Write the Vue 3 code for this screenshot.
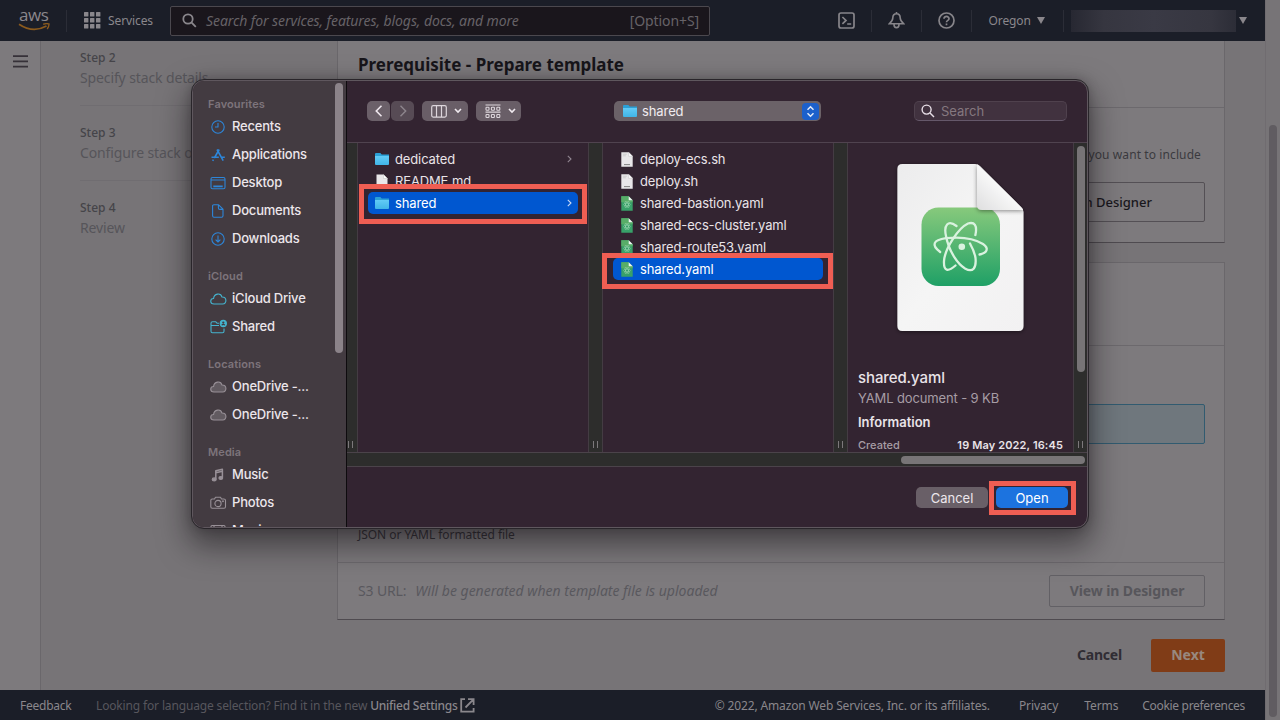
<script setup>
const steps = [
  { n: 'Step 2', label: 'Specify stack details' },
  { n: 'Step 3', label: 'Configure stack options' },
  { n: 'Step 4', label: 'Review' },
]
const groups = [
  { title: 'Favourites', tone: 'blue', items: [['clock', 'Recents'], ['apps', 'Applications'], ['desktop', 'Desktop'], ['doc', 'Documents'], ['down', 'Downloads']] },
  { title: 'iCloud', tone: 'teal', items: [['cloud', 'iCloud Drive'], ['sharedf', 'Shared']] },
  { title: 'Locations', tone: 'grey', items: [['cloudf', 'OneDrive -...'], ['cloudf', 'OneDrive -...']] },
  { title: 'Media', tone: 'grey', items: [['music', 'Music'], ['photo', 'Photos'], ['movie', 'Movies']] },
]
const colA = [
  { kind: 'folder', name: 'dedicated', more: true },
  { kind: 'text', name: 'README.md' },
  { kind: 'folder', name: 'shared', more: true, on: true },
]
const colB = [
  { kind: 'text', name: 'deploy-ecs.sh' },
  { kind: 'text', name: 'deploy.sh' },
  { kind: 'yaml', name: 'shared-bastion.yaml' },
  { kind: 'yaml', name: 'shared-ecs-cluster.yaml' },
  { kind: 'yaml', name: 'shared-route53.yaml' },
  { kind: 'yaml', name: 'shared.yaml', on: true },
]
</script>

<template>
  <div class="screen">
    <div class="page">
      <header class="top">
        <div class="logo">
          <span class="aws">aws</span>
          <svg class="smile" width="33" height="9" viewBox="0 0 33 9"><path d="M1 1.2 Q15 10.5 28.5 3" fill="none" stroke="#8b5a1d" stroke-width="1.7" /><path d="M25.2 1.2 Q29 .2 31 1 Q31.2 3 29.2 6" fill="none" stroke="#8b5a1d" stroke-width="1.4" /></svg>
        </div>
        <i class="vr"></i>
        <div class="services">
          <svg width="17" height="17" viewBox="0 0 17 17" fill="#8a878c"><template v-for="r in 3" :key="r"><rect v-for="c in 3" :key="c" :x="(c - 1) * 6" :y="(r - 1) * 6" width="4.4" height="4.4" rx=".5" /></template></svg>
          <span>Services</span>
        </div>
        <div class="find">
          <svg width="15" height="15" viewBox="0 0 15 15" fill="none" stroke="#8a878c" stroke-width="1.8"><circle cx="6" cy="6" r="4.7" /><path d="M9.4 9.4 L13.8 13.8" /></svg>
          <em>Search for services, features, blogs, docs, and more</em>
          <span class="key">[Option+S]</span>
        </div>
        <div class="tools">
          <svg width="17" height="17" viewBox="0 0 17 17" fill="none" stroke="#87858a" stroke-width="1.7"><rect x="1" y="1" width="15" height="15" rx="2" /><path d="M4.4 5 L8 8.4 L4.4 11.8 M9.2 12h4" /></svg>
          <i class="vr"></i>
          <svg width="17" height="17" viewBox="0 0 17 17" fill="none" stroke="#87858a" stroke-width="1.6"><path d="M8.5 1.7 C5.7 1.7 4.8 4 4.8 6 C4.8 8.5 3.6 9.7 1.5 11.7 H15.5 C13.4 9.7 12.2 8.5 12.2 6 C12.2 4 11.3 1.7 8.5 1.7Z M8.5 0v2 M6 12.5 C6 16.6 11 16.6 11 12.5" /></svg>
          <i class="vr"></i>
          <svg width="17" height="17" viewBox="0 0 17 17" fill="none" stroke="#87858a" stroke-width="1.7"><circle cx="8.5" cy="8.5" r="7.5" /><path d="M6 6.8 C6 3.6 11.1 3.7 11 6.8 C11 8.5 8.5 8.3 8.5 10.3 M8.5 11.5v1.7" /></svg>
          <i class="vr"></i>
          <span class="region">Oregon</span>
          <i class="tri"></i>
          <i class="vr"></i>
          <i class="account"></i>
          <i class="tri"></i>
        </div>
      </header>

      <main class="body">
        <aside class="rail"><svg width="15" height="13" viewBox="0 0 15 13" stroke="#363138" stroke-width="1.8"><path d="M0 1.2h15M0 6.4h15M0 11.6h15" /></svg></aside>
        <nav class="steps">
          <div v-for="s in steps" :key="s.n" class="step"><b>{{ s.n }}</b><span>{{ s.label }}</span></div>
        </nav>
        <section class="content">
          <div class="panel one">
            <h2>Prerequisite - Prepare template</h2>
            <p class="hint">AWS resources you want to include</p>
            <div class="tile">Create template in Designer</div>
          </div>
          <div class="panel two">
            <div class="cap"></div>
            <div class="mid">
              <div class="tile blue"></div>
              <p>JSON or YAML formatted file</p>
            </div>
            <div class="url">
              <span class="lab">S3 URL:</span><em>Will be generated when template file is uploaded</em>
              <button class="view">View in Designer</button>
            </div>
          </div>
          <div class="actions"><span>Cancel</span><button class="next">Next</button></div>
        </section>
      </main>

      <footer class="foot">
        <span class="fb">Feedback</span>
        <span class="lang">Looking for language selection? Find it in the new <b>Unified Settings</b></span>
        <svg width="15" height="15" viewBox="0 0 15 15" fill="none" stroke="#8a878c" stroke-width="1.8"><path d="M5 1.2H1.2v12.4h12.4V10M8 1.2h5.6V7M13.2 1.6L5.5 9.5" /></svg>
        <span class="copy">© 2022, Amazon Web Services, Inc. or its affiliates.</span>
        <span class="f1">Privacy</span><span class="f2">Terms</span><span class="f3">Cookie preferences</span>
      </footer>
    </div>
    <div class="scroll"><i></i></div>

    <div class="dialog">
      <aside class="side">
        <div class="groups">
          <template v-for="g in groups" :key="g.title">
            <h4>{{ g.title }}</h4>
            <div v-for="(it, k) in g.items" :key="k" class="place" :class="g.tone">
              <svg width="17" height="16" viewBox="0 0 17 16" fill="none" stroke="currentColor" stroke-width="1.1" stroke-linejoin="round">
                <template v-if="it[0] === 'clock'"><circle cx="8" cy="8" r="6.2" /><path d="M8 4v4H5" /></template>
                <path v-else-if="it[0] === 'apps'" stroke-width="1.6" d="M9.2 2.5L4.3 11M3.4 12.6l-.7 1.2M7 2.5l6.2 11.2M1.5 10.2h7.3M11.8 10.2h3" />
                <template v-else-if="it[0] === 'desktop'"><rect x="1" y="2.5" width="14" height="11.3" rx="1.5" /><path d="M1 5h14" /><path stroke-width="1.6" d="M3.3 11.4h9.4" /></template>
                <path v-else-if="it[0] === 'doc'" d="M3.8 1.8h4.8l4.4 4.4v6.6q0 1.4-1.4 1.4H4q-1.4 0-1.4-1.4V3q0-1.2 1.2-1.2zM8.4 2v3q0 1.4 1.4 1.4h3" />
                <template v-else-if="it[0] === 'down'"><circle cx="8" cy="8" r="6.2" /><path d="M8 4.5v6.4M5.6 8.6L8 11l2.4-2.4" /></template>
                <path v-else-if="it[0] === 'cloud' || it[0] === 'cloudf'" :fill="it[0] === 'cloudf' ? '#625b61' : 'none'" d="M4 13 C-.4 12.8-.2 7.6 3.6 7.5 C4 2.2 10.8 1.6 12 6 C17 5.8 17.2 12.8 12.6 13Z" />
                <template v-else-if="it[0] === 'sharedf'"><path d="M9 4.2H7L5.8 2.8H2.5Q1 2.8 1 4.3v8Q1 13.7 2.5 13.7h10q1.5 0 1.5-1.5V9.5M1 6.5h8" /><circle cx="13.3" cy="4.5" r="3.1" fill="currentColor" /><circle cx="13.3" cy="3.6" r=".6" stroke="#433b41" /><path d="M11.7 6.2q1.6-1.7 3.2 0" stroke="#433b41" /></template>
                <template v-else-if="it[0] === 'music'"><path stroke-width="1.5" d="M5.8 12V3.8l6.6-1.5v8.3M5.8 5.8l6.6-1.5" /><ellipse cx="4.2" cy="12.4" rx="2" ry="1.5" fill="currentColor" /><ellipse cx="10.8" cy="11" rx="1.9" ry="1.4" fill="currentColor" /></template>
                <template v-else-if="it[0] === 'photo'"><path d="M2.2 4h2.3l1-1.8h5l1 1.8h2.3Q15.5 4 15.5 5.5v6.3q0 1.5-1.5 1.5H2.2Q.8 13.3.8 11.8V5.5Q.8 4 2.2 4z" /><circle cx="8" cy="8.5" r="3.1" /><circle cx="13" cy="6.2" r=".4" /></template>
                <template v-else><rect x="1" y="2.5" width="14" height="11" rx="1" /><path d="M4 2.5v11M12 2.5v11M1 6h3M12 6h3M4 8h8" /></template>
              </svg>
              <span>{{ it[1] }}</span>
            </div>
          </template>
        </div>
        <i class="sidebar-thumb"></i>
      </aside>
      <div class="main">
        <div class="bar">
          <div class="nav">
            <span><svg width="10" height="14" viewBox="0 0 10 14"><path d="M7.5 1.8L2.3 7l5.2 5.2" fill="none" stroke="#eee6ed" stroke-width="1.6" /></svg></span>
            <span><svg width="10" height="14" viewBox="0 0 10 14"><path d="M2.5 1.8L7.7 7l-5.2 5.2" fill="none" stroke="#8e868d" stroke-width="1.4" /></svg></span>
          </div>
          <div class="pill a">
            <svg width="16" height="13" viewBox="0 0 16 13" fill="none" stroke="#ddd6dc" stroke-width="1.2"><rect x=".7" y=".7" width="14.6" height="11.4" rx="1.5" /><path d="M5.5 1v11M10.5 1v11" /></svg>
            <svg width="8" height="6" viewBox="0 0 8 6"><path d="M1 1l3 3 3-3" fill="none" stroke="#f0eaef" stroke-width="1.6" /></svg>
          </div>
          <div class="pill b">
            <svg width="16" height="15" viewBox="0 0 16 15" fill="none" stroke="#ddd6dc" stroke-width="1.1"><path d="M.5 1h15M.5 8.1h15" /><template v-for="y in [3.2, 10.5]" :key="y"><rect v-for="x in [1, 6.4, 11.8]" :key="x" :x="x" :y="y" width="3" height="3" rx=".7" /></template></svg>
            <svg width="8" height="6" viewBox="0 0 8 6"><path d="M1 1l3 3 3-3" fill="none" stroke="#f0eaef" stroke-width="1.6" /></svg>
          </div>
          <div class="path">
            <i class="folder"></i><span>shared</span>
            <b><svg width="9" height="13" viewBox="0 0 9 13"><path d="M1.5 4.8l3-3 3 3M1.5 8.2l3 3 3-3" fill="none" stroke="#dfe8f8" stroke-width="1.5" /></svg></b>
          </div>
          <div class="search"><svg width="14" height="14" viewBox="0 0 14 14" fill="none" stroke="#e8dfe7" stroke-width="1.4"><circle cx="5.6" cy="5.6" r="4.5" /><path d="M9 9l4 4" /></svg><span>Search</span></div>
        </div>
        <div class="cols">
          <div class="gut g0"><i class="grip"></i></div>
          <div class="col">
            <div v-for="f in colA" :key="f.name" class="row" :class="{ on: f.on }">
              <i v-if="f.kind === 'folder'" class="folder"></i>
              <svg v-else class="file" width="12" height="15" viewBox="0 0 12 15"><path d="M.5.5h7l4 4v10H.5z" fill="#e9e7e9" /><path d="M7.5.5v4h4z" fill="#fff" stroke="#b9b5b9" stroke-width=".4" /></svg>
              <span>{{ f.name }}</span>
              <svg v-if="f.more" class="chev" width="5" height="8" viewBox="0 0 5 8"><path d="M.8.8L4 4 .8 7.2" fill="none" :stroke="f.on ? '#c7d8f5' : '#908490'" stroke-width="1.1" /></svg>
            </div>
          </div>
          <div class="gut"><i class="grip"></i></div>
          <div class="col second">
            <div v-for="f in colB" :key="f.name" class="row" :class="{ on: f.on }">
              <svg class="file" width="12" height="15" viewBox="0 0 12 15">
                <template v-if="f.kind === 'text'"><path d="M.3.3h7.4l4 4v10.4H.3z" fill="#e9e7e9" /><path d="M7.7.3v4h4z" fill="#fff" stroke="#b9b5b9" stroke-width=".4" /><path d="M1.8 2.2h4M1.8 3.8h3" stroke="#bbb" stroke-width=".6" /><path d="M3 12.6h6" stroke="#777" stroke-width=".9" /></template>
                <template v-else><path d="M.3.3h7.4l4 4v10.4H.3z" fill="#38a169" /><path d="M.3.3h7.4v4h4v2H.3z" fill="#58ad68" /><path d="M7.7.3v4h4z" fill="#f1f5f1" /><g fill="none" stroke="#a9dcb9" stroke-width=".45"><ellipse cx="6" cy="8.5" rx="3.4" ry="1.4" /><ellipse cx="6" cy="8.5" rx="3.4" ry="1.4" transform="rotate(60 6 8.5)" /><ellipse cx="6" cy="8.5" rx="3.4" ry="1.4" transform="rotate(120 6 8.5)" /></g></template>
              </svg>
              <span>{{ f.name }}</span>
            </div>
          </div>
          <div class="gut"><i class="grip"></i></div>
          <div class="col info">
            <svg class="big" width="140" height="180" viewBox="0 0 140 180">
              <defs>
                <linearGradient id="paper" x1="0" y1="0" x2="1" y2="1"><stop offset="0" stop-color="#ececed" /><stop offset=".5" stop-color="#f5f5f5" /><stop offset="1" stop-color="#f2f1f2" /></linearGradient>
                <linearGradient id="leaf" x1="0" y1="0" x2="0" y2="1"><stop offset="0" stop-color="#87c97c" /><stop offset="1" stop-color="#1fa066" /></linearGradient>
                <linearGradient id="fold" x1="0" y1="1" x2=".55" y2=".45"><stop offset="0" stop-color="#dededf" /><stop offset="1" stop-color="#fbfbfb" /></linearGradient>
                <filter id="sh" x="-30%" y="-30%" width="160%" height="160%"><feDropShadow dx="0" dy="1" stdDeviation="2.2" flood-color="#000" flood-opacity=".45" /></filter>
                <clipPath id="sheet"><path d="M12.4 6H85Q88 6 90 8L131 49Q133.5 51 133.5 54V168Q133.5 173 128.5 173H12.4Q7.4 173 7.4 168V11Q7.4 6 12.4 6Z" /></clipPath>
              </defs>
              <path d="M12.4 6H85Q88 6 90 8L131 49Q133.5 51 133.5 54V168Q133.5 173 128.5 173H12.4Q7.4 173 7.4 168V11Q7.4 6 12.4 6Z" fill="url(#paper)" filter="url(#sh)" />
              <rect x="31.5" y="49.5" width="78.5" height="78.5" rx="17" fill="url(#leaf)" />
              <g clip-path="url(#sheet)"><path d="M87 6V47Q87 52 92 52H135Z" fill="url(#fold)" filter="url(#sh)" /></g>
              <g fill="none" stroke="#d9f2df" stroke-width="2.3" stroke-linecap="round">
                <path d="M50.2 94C41 87 43 82 56 80.2C71 78.5 85 81 93 86C99.5 90.5 97 95 89.5 96.5" />
                <path d="M66.5 68C58 61.5 53.5 67 56 78C59 94 68 106 75 110.5C83 115 86.5 110 85.5 100C84.8 95 82.5 90 80 85.5" />
                <path d="M85.4 77C87.5 67.5 84.5 63.5 78 65.5C68.5 70 55 90 54 103C53.5 113.5 58 114 65.5 107.5" />
              </g>
              <circle cx="71.8" cy="88.7" r="3.3" fill="#d9f2df" />
            </svg>
            <h3>shared.yaml</h3>
            <p class="type">YAML document - 9 KB</p>
            <b class="inf">Information</b>
            <div class="meta"><span>Created</span><b>19 May 2022, 16:45</b></div>
          </div>
          <div class="gut last"><i class="vthumb"></i><i class="grip"></i></div>
        </div>
        <div class="hscroll"><i></i></div>
        <div class="btns"><button>Cancel</button><button class="open">Open</button></div>
      </div>
    </div>

    <i class="mark m1"></i>
    <i class="mark m2"></i>
    <i class="mark m3"></i>
  </div>
</template>

<style>
body { margin: 0; background: #777477; }
</style>

<style scoped>
* { box-sizing: border-box; }
h2, h3, h4, p { margin: 0; }
button { font: inherit; border: 0; padding: 0; }
svg { flex: none; display: block; }
.screen { position: relative; display: flex; width: 1280px; height: 720px; overflow: hidden; background: #777477; font-family: "Noto Sans", "Open Sans", sans-serif; }
.page { width: 1265px; height: 720px; display: flex; flex-direction: column; }
.scroll { width: 15px; background: #777477; border-left: 1px solid #706c70; padding: 125px 0 0 3px; }
.scroll i { display: block; width: 8px; height: 592px; border-radius: 4px; background: #605c61; }

.top { height: 41px; background: #1b1e28; display: flex; align-items: center; color: #8a878c; font-size: 12px; white-space: nowrap; }
.logo { width: 33px; margin-left: 18px; height: 26px; }
.aws { display: block; font-family: "Open Sans", sans-serif; font-size: 17px; line-height: 16px; height: 17px; padding-left: 1px; font-weight: 500; letter-spacing: -.4px; margin-top: -1px; }
.smile { margin-top: -1px; }
.vr { width: 1px; height: 22px; background: #2b2d37; flex: none; }
.logo + .vr { margin-left: 15px; }
.services { display: flex; align-items: center; gap: 7px; margin-left: 17px; width: 86px; letter-spacing: -.1px; }
.find { width: 540px; height: 30px; border: 1px solid #4b484e; border-radius: 2px; background: #1a161c; display: flex; align-items: center; padding: 0 10px 0 11px; font-size: 14px; color: #666267; }
.find em { margin-left: 9px; letter-spacing: -.08px; }
.key { margin-left: auto; letter-spacing: -.1px; }
.tools { display: flex; align-items: center; margin-left: 127.5px; }
.tools .vr { margin: 0 16px; }
.tools .vr:nth-of-type(3) { margin-right: 17px; }
.region { width: 42px; letter-spacing: -.1px; }
.tri { width: 0; height: 0; border: 4px solid transparent; border-top: 7px solid #8a878c; border-bottom: 0; margin-left: 6px; }
.tools .tri + .vr { margin: 0 7px 0 18px; }
.account { width: 165px; height: 22px; background: linear-gradient(90deg, #272832, #363640 20%, #3a3a45 50%, #363640 85%, #2c2d37); }
.account + .tri { margin-left: 3px; }

.body { height: 649px; display: flex; background: #777477; }
.rail { width: 41px; background: #7d7a7d; border-right: 1px solid #6a676b; padding: 14px 0 0 13px; }
.steps { width: 296px; padding-left: 39px; padding-top: 7px; }
.step { width: 225px; height: 75px; color: #454449; font-size: 12px; line-height: 19px; display: flex; flex-direction: column; background: linear-gradient(#706d71, #706d71) 0 57px / 100% 1px no-repeat; }
.step b { font-weight: 500; }
.step span { font-size: 14px; line-height: 21px; color: #56555a; letter-spacing: -.12px; }
.step:last-child { background: none; }
.content { width: 888px; }
.panel { background: #7d7a7d; border: 1px solid #6a676b; border-bottom-color: #4f4b50; }
.one { height: 202px; border-top: 0; display: flex; flex-direction: column; align-items: flex-end; }
h2 { width: 100%; height: 67px; padding: 12px 20px; font-size: 17px; line-height: 24px; color: #17151a; border-bottom: 1px solid #6c696d; }
.hint { font-size: 12px; line-height: 18px; color: #3b3a3f; margin: 38px 23px 0 0; letter-spacing: .1px; }
.tile { width: 300px; height: 40px; margin: 18px 19px 0 0; border: 1px solid #545055; border-radius: 2px; padding: 0 52px 0 0; line-height: 38px; font-size: 13px; font-weight: 500; text-align: right; color: #19171c; background: #7d7a7d; }
.two { margin-top: 19px; height: 358px; }
.cap { height: 83px; border-bottom: 1px solid #6c696d; }
.mid { height: 217px; padding-top: 58px; border-bottom: 1px solid #6c696d; }
.mid .tile { margin: 0 0 0 567px; border-color: #315b70; background: #6f777d; }
.mid p { margin: 81px 0 0 20px; font-size: 12px; line-height: 20px; color: #333137; letter-spacing: -.05px; }
.url { height: 56px; display: flex; align-items: center; padding: 0 19px 0 20px; font-size: 14px; color: #59585d; }
.url > span, .url em { padding-bottom: 2px; }
.url em { margin-left: 9px; }
.lab { letter-spacing: -.15px; }
.view { margin-left: auto; width: 156px; height: 32px; border: 1px solid #626065; border-radius: 2px; background: none; color: #57565b; font-size: 14px; line-height: 30px; font-weight: 700; letter-spacing: -.1px; }
.actions { display: flex; justify-content: flex-end; align-items: center; gap: 29px; margin-top: 19px; font-size: 14px; font-weight: 700; color: #302d34; line-height: 30px; }
.actions span { letter-spacing: -.2px; padding-bottom: 2px; }
.next { width: 74px; height: 33px; border-radius: 2px; background: #803c17; color: #98887e; font-weight: 700; padding-bottom: 2px; }

.foot { height: 30px; background: #1b1e28; color: #8a878c; display: flex; align-items: center; padding: 0 20px; font-size: 12px; white-space: nowrap; }
.fb { width: 76px; letter-spacing: -.25px; }
.lang { color: #57565d; letter-spacing: -.15px; }
.lang b { color: #8a878c; font-weight: 500; letter-spacing: -.25px; }
.foot svg { margin-left: 2px; }
.copy { margin-left: auto; letter-spacing: -.14px; }
.f1 { margin-left: 29px; letter-spacing: -.1px; }
.f2 { margin-left: 26px; letter-spacing: -.1px; }
.f3 { margin-left: 24px; letter-spacing: -.32px; }

.dialog { position: absolute; left: 192px; top: 80px; width: 896px; height: 448px; border: 1px solid #5f575e; border-radius: 12px; overflow: hidden; display: flex; background: #332431; outline: 1px solid #29252a; box-shadow: 0 14px 30px 4px rgba(15, 11, 16, .5), 0 0 12px rgba(15, 11, 16, .25); font-family: Inter, "Noto Sans", sans-serif; font-size: 13px; color: #e9e3e8; }
.side { width: 154px; background: #433b41; border-right: 1px solid #0e0b0e; display: flex; flex: none; }
.groups { width: 142px; padding: 15px 0 0 15px; height: 446px; overflow: hidden; white-space: nowrap; }
h4 { font-size: 11px; line-height: 16px; font-weight: 600; color: #7d747b; padding-top: 16px; letter-spacing: .12px; }
h4:first-child { padding-top: 0; }
.place { height: 28px; display: flex; align-items: center; gap: 5px; padding-left: 2px; font-weight: 500; letter-spacing: -.2px; }
.place svg { margin-top: 1px; }
.blue { color: #2d86d9; }
.teal { color: #45b4cf; }
.grey { color: #989097; }
.place span { color: #ece6eb; }
.sidebar-thumb { width: 8px; height: 270px; margin-top: 2px; border-radius: 4px; background: #8b8389; }
.main { flex: 1; display: flex; flex-direction: column; }
.bar { height: 62px; border-bottom: 1px solid #50434f; display: flex; align-items: center; padding: 0 22px 1px 20px; }
.nav { display: flex; gap: 1px; }
.nav span { width: 23px; height: 20px; border-radius: 5px; background: #6b6069; display: flex; align-items: center; justify-content: center; }
.nav span + span { background: #574b55; }
.pill { height: 20px; border-radius: 5px; background: #695e67; display: flex; align-items: center; gap: 7px; padding-left: 9px; }
.a { width: 46px; margin-left: 8px; }
.b { width: 45px; margin-left: 8px; }
.path { width: 207px; height: 20px; margin-left: 93px; border-radius: 5px; background: #6b6268; display: flex; align-items: center; padding: 0 2px 0 9px; color: #f0ebef; }
.path span { margin-left: 5px; letter-spacing: -.1px; }
.path b { margin-left: auto; width: 17px; height: 17px; border-radius: 4px; background: #1c60cb; display: flex; align-items: center; justify-content: center; }
.search { width: 153px; height: 20px; margin-left: auto; border: 1px solid #4f414d; border-bottom-color: #65586a; border-radius: 5px; background: #41323f; display: flex; align-items: center; gap: 6px; padding-left: 6px; color: #85787f; }
.folder { display: block; flex: none; width: 14px; height: 12px; border-radius: 1px; background: linear-gradient(#2ba0d6 0 3px, #62cbf6 3px, #40b5e8); clip-path: polygon(0 0, 38% 0, 48% 12%, 100% 12%, 100% 100%, 0 100%); }
.cols { height: 309px; display: flex; }
.gut { width: 15px; flex: none; background: #2d2d2c; border: 0 solid #443c43; border-width: 0 1px; display: flex; flex-direction: column; align-items: center; justify-content: flex-end; padding-bottom: 4px; }
.g0 { width: 11px; border-left: 0; padding-right: 4px; }
.grip { width: 5px; height: 7px; border: 1px solid #7c787b; border-width: 0 1px; }
.col { width: 230px; flex: none; padding: 5px 10px; overflow: hidden; }
.row { height: 22px; display: flex; align-items: center; padding: 0 6px 0 7px; border-radius: 5px; white-space: nowrap; letter-spacing: -.13px; }
.row span { margin-left: 6px; }
.row.on { background: #0057d0; color: #fff; }
.chev { margin-left: auto; }
.file { margin: 0 1px; }
.second .row { padding-left: 7px; }
.info { width: 225px; padding: 15px 10px 0; display: flex; flex-direction: column; }
.big { margin-left: 32px; }
h3 { margin-top: 30px; font-size: 15px; line-height: 20px; font-weight: 500; letter-spacing: -.1px; }
.type { line-height: 16px; margin-top: 2px; color: #a79da5; letter-spacing: -.13px; }
.inf { line-height: 18px; margin-top: 7px; font-weight: 600; }
.meta { display: flex; justify-content: space-between; font-size: 11px; line-height: 18px; margin-top: 5px; color: #a79da5; font-weight: 500; }
.meta b { color: #e9e3e8; font-weight: 600; letter-spacing: .13px; }
.last { width: 16px; border-right: 0; justify-content: space-between; padding: 3px 2px 4px 0; }
.vthumb { width: 8px; height: 226px; border-radius: 4px; background: #777476; }
.hscroll { height: 15px; background: #2d2d2c; border: 1px solid #4b434a; border-width: 1px 0; padding: 3px 3px 0 0; display: flex; justify-content: flex-end; }
.hscroll i { width: 184px; height: 8px; margin-right: 1px; border-radius: 4px; background: #787577; }
.btns { flex: 1; display: flex; justify-content: flex-end; gap: 8px; padding: 20px 19px 0 0; }
.btns button { width: 72px; height: 21px; border-radius: 5px; background: #695f67; color: #ece6eb; line-height: 20px; position: relative; left: -2px; }
.btns .open { background: #1c73df; color: #fff; }
.mark { position: absolute; border: 5px solid #ef5e53; }
.m1 { left: 359px; top: 184px; width: 228px; height: 40px; }
.m2 { left: 602px; top: 253px; width: 231px; height: 36px; }
.m3 { left: 989px; top: 481px; width: 87px; height: 34px; }
</style>
